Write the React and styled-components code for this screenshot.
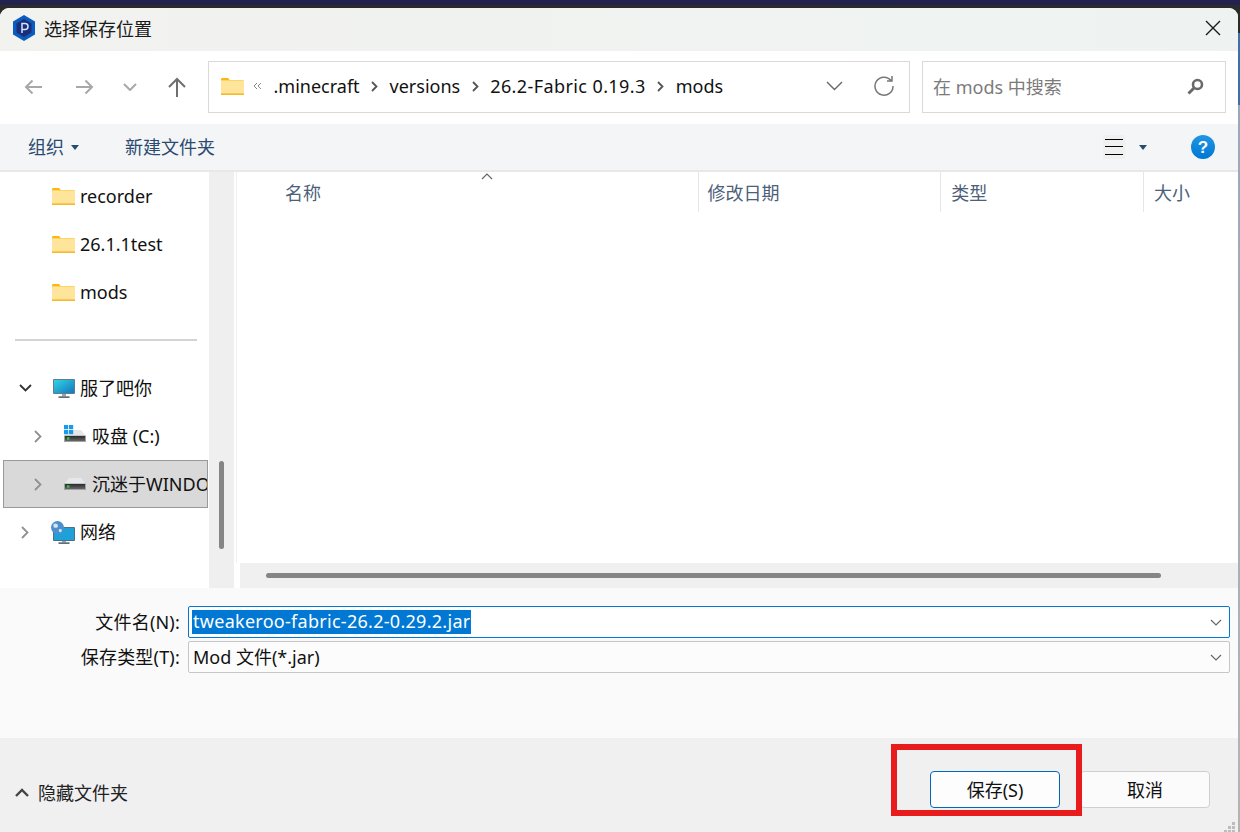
import React from 'react'
import styled, { createGlobalStyle } from 'styled-components'

const GlobalStyle = createGlobalStyle`
  html, body { margin: 0; padding: 0; height: 100%; background: #23214d; overflow: hidden; }
  * { box-sizing: border-box; }
  #root { height: 100%; }
`

const font = `"Noto Sans", "Noto Sans CJK SC", sans-serif`

const Screen = styled.div`
  position: relative;
  width: 1240px;
  height: 832px;
  padding-top: 5px;
  background: #23214d;
  font-family: ${font};
  font-size: 18px;
  color: #111;
`
const Desk = styled.div`
  display: flex;
  height: 827px;
  padding-top: 3px;
  background: linear-gradient(to bottom, #2b2b2b 0, #2b2b2b 28px, #3d70a8 28px, #3d70a8 100px, #9aa9b8 100px, #b4b4b4 827px);
`
const Win = styled.div`
  display: flex;
  flex-direction: column;
  width: 1238px;
  height: 824px;
  background: #fff;
  border-radius: 9px 9px 0 0;
  overflow: hidden;
`
const TitleBar = styled.div`
  display: flex;
  align-items: center;
  flex: 0 0 43px;
  padding: 0 17px 3px 12px;
  background: linear-gradient(to right, #f2f2ef, #eef3f2);
`
const TitleText = styled.span`
  flex: 1;
  margin-left: 8px;
  font-size: 18px;
  color: #1a1a1a;
`
const NavBar = styled.div`
  display: flex;
  align-items: flex-start;
  flex: 0 0 73px;
  padding: 10px 12px 0 8px;
`
const NavBtn = styled.div`
  display: flex;
  align-items: center;
  justify-content: center;
  flex: 0 0 auto;
  width: ${p => p.$w}px;
  height: ${p => p.$h || 52}px;
  margin-left: ${p => p.$ml || 0}px;
`
const AddressBox = styled.div`
  display: flex;
  align-items: center;
  width: 702px;
  height: 52px;
  margin-left: 2px;
  padding: 0 5px 2px 12px;
  border: 1px solid #d9d9d9;
`
const Crumbs = styled.div`
  display: flex;
  align-items: center;
  gap: 11.5px;
  flex: 1;
  margin-left: 9px;
`
const CrumbText = styled.span`
  letter-spacing: ${p => p.$spread || 0}px;
`
const SearchBox = styled.div`
  display: flex;
  align-items: center;
  justify-content: space-between;
  width: 304px;
  height: 52px;
  margin-left: 12px;
  padding: 0 21px 2px 10px;
  border: 1px solid #d9d9d9;
  color: #7b7b7b;
`
const ToolBar = styled.div`
  display: flex;
  align-items: center;
  flex: 0 0 48px;
  padding: 0 23px 0 28px;
  background: #f3f5f7;
  border-bottom: 2px solid #e8e8e8;
  color: #2c4a70;
`
const ToolItem = styled.div`
  display: flex;
  align-items: center;
  gap: 7px;
  margin-right: 46px;
`
const ToolLabel = styled.span`
  padding-bottom: 2px;
`
const ViewTools = styled.div`
  display: flex;
  align-items: center;
  margin-left: auto;
  gap: 14px;
`
const ViewBtn = styled.div`
  display: flex;
  align-items: center;
  justify-content: center;
  width: 22px;
  height: 24px;
  background: #f0f0f0;
`
const HelpIcon = styled.svg`
  margin-left: 30px;
`
const Middle = styled.div`
  display: flex;
  height: 416px;
`
const Side = styled.div`
  width: 209px;
  overflow: hidden;
`
const TreeRow = styled.div`
  display: flex;
  align-items: center;
  width: ${p => (p.$active ? 205 : 209)}px;
  height: 48px;
  margin-left: ${p => (p.$active ? 3 : 0)}px;
  padding-left: ${p => (p.$active ? p.$left - 3 : p.$left)}px;
  background: ${p => (p.$active ? '#d9d9d9' : 'transparent')};
  outline: ${p => (p.$active ? '1px solid #999' : 'none')};
  outline-offset: -1px;
  white-space: nowrap;
  overflow: hidden;
`
const TreeLabel = styled.span`
  padding-bottom: ${p => (p.$lift ? 2 : 0)}px;
`
const Arrow = styled.div`
  display: flex;
  flex: 0 0 12px;
  justify-content: center;
  margin-right: ${p => p.$gap}px;
`
const TreeIcon = styled.div`
  display: flex;
  flex: 0 0 auto;
  margin-right: ${p => p.$gap}px;
`
const Divider = styled.div`
  display: flex;
  align-items: center;
  height: 48px;
  padding: 0 12px 0 15px;
  &::after { content: ''; flex: 1; height: 2px; background: #d4d4d4; }
`
const SideTrack = styled.div`
  position: relative;
  width: 25px;
  background: #efefef;
`
const SideThumb = styled.div`
  position: absolute;
  left: 10px;
  top: 289px;
  width: 5px;
  height: 88px;
  border-radius: 3px;
  background: #858585;
`
const Main = styled.div`
  display: flex;
  flex-direction: column;
  width: 1004px;
  padding-left: 2px;
`
const ListPane = styled.div`
  flex: 1;
  border-left: 1px solid #f0f0f0;
`
const HeaderRow = styled.div`
  position: relative;
  display: flex;
  height: 40px;
`
const HeaderCell = styled.div`
  display: flex;
  align-items: center;
  width: ${p => p.$w}px;
  padding-left: ${p => p.$pad}px;
  border-right: ${p => (p.$line ? '1px solid #e6e6e6' : 'none')};
  color: #4c607a;
`
const SortMark = styled.div`
  position: absolute;
  left: 244px;
  top: 0;
  display: flex;
`
const HScroll = styled.div`
  display: flex;
  align-items: center;
  flex: 0 0 25px;
  margin-left: 4px;
  padding: 0 77px 0 26px;
  background: #f0f0f0;
`
const HThumb = styled.div`
  flex: 1;
  height: 5px;
  border-radius: 3px;
  background: #858585;
`
const FormPanel = styled.div`
  display: flex;
  flex-direction: column;
  gap: 3px;
  flex: 0 0 150px;
  padding: 18px 8px 0 0;
  background: #fafafa;
`
const FormRow = styled.div`
  display: flex;
  align-items: center;
  height: 32px;
`
const FieldLabel = styled.label`
  width: 180px;
  padding-bottom: 2px;
  text-align: right;
  letter-spacing: 0.2px;
  color: #111;
`
const Field = styled.div`
  display: flex;
  align-items: center;
  justify-content: space-between;
  margin-left: 8px;
  width: 1042px;
  height: 32px;
  padding: 0 7px 0 3px;
  background: ${p => (p.$focus ? '#fff' : '#fcfcfc')};
  border: 1px solid ${p => (p.$focus ? '#0078d4' : '#c6c6c6')};
  border-radius: 2px;
`
const Selected = styled.span`
  display: block;
  height: 24px;
  line-height: 22px;
  padding: 0 1px;
  background: #0078d4;
  color: #fff;
  letter-spacing: 0.28px;
`
const PlainValue = styled.span`
  padding: 0 0 2px 1px;
`
const Footer = styled.div`
  display: flex;
  align-items: flex-start;
  flex: 1;
  padding: 33px 28px 0 15px;
  background: #f0f0f0;
`
const HideFolders = styled.div`
  display: flex;
  align-items: center;
  gap: 9px;
  height: 42px;
  color: #222;
`
const Buttons = styled.div`
  display: flex;
  gap: 20px;
  margin-left: auto;
`
const DialogBtn = styled.button`
  width: 130px;
  height: 37px;
  padding: 0 0 2px;
  background: ${p => (p.$primary ? '#fdfdfd' : '#fbfbfb')};
  border: 1px solid ${p => (p.$primary ? '#0067c0' : '#cfcfcf')};
  border-radius: 4px;
  font: inherit;
  color: #111;
`
const RedMark = styled.div`
  position: absolute;
  left: 891px;
  top: 744px;
  width: 191px;
  height: 72px;
  border: 6px solid #e81c1c;
`
const Grip = styled.svg`
  position: absolute;
  right: 2px;
  bottom: 0;
`

const Folder = () => (
  <svg width="23" height="18" viewBox="0 0 23 18">
    <path d="M0 2.5C0 1.5.6 1 1.5 1H7l2 2.5H0z" fill="#fbb612" />
    <rect x="0" y="3" width="23" height="15" rx="1" fill="#ffd466" />
    <rect x="0" y="4" width="23" height="12" fill="#ffe59c" />
    <rect x="0" y="16.5" width="23" height="1.5" fill="#f6bb35" />
  </svg>
)

const Logo = () => (
  <svg width="24" height="26" viewBox="0 0 24 26">
    <path d="M12 0L23 6.5V19.5L12 26L1 19.5V6.5Z" fill="#0a5cc0" />
    <path d="M12 4L19.5 8.5V17.5L12 22L4.5 17.5V8.5Z" fill="#1c2e7a" />
    <path d="M10 18V8.5h3a3 3 0 0 1 0 6h-3" fill="none" stroke="#cfe6ff" strokeWidth="1.5" />
  </svg>
)

const Line = ({ w, h, d, color, sw = 1.8 }) => (
  <svg width={w} height={h} viewBox={`0 0 ${w} ${h}`}>
    <path d={d} fill="none" stroke={color} strokeWidth={sw} />
  </svg>
)

const Caret = ({ color = '#2c4a70' }) => (
  <svg width="8" height="5" viewBox="0 0 8 5"><path d="M0 0H8L4 5Z" fill={color} /></svg>
)

const Crumb = () => <Line w={7} h={11} d="M1 1L5.5 5.5L1 10" color="#555" />

const Monitor = () => (
  <svg width="22" height="19" viewBox="0 0 22 19">
    <defs>
      <linearGradient id="scr" x1="0" y1="0" x2="1" y2="1">
        <stop offset="0" stopColor="#31d3e4" />
        <stop offset="1" stopColor="#1478bc" />
      </linearGradient>
    </defs>
    <rect x="0" y="0" width="22" height="15" rx="1" fill="#5f7d8e" />
    <rect x="1" y="1" width="20" height="13" fill="url(#scr)" />
    <rect x="9" y="15" width="4" height="2.5" fill="#93a6b2" />
    <rect x="5.5" y="17.3" width="11" height="1.7" fill="#5f6f7a" />
  </svg>
)

const Drive = ({ win, id }) => (
  <svg width="22" height="22" viewBox="0 0 22 22">
    <defs>
      <linearGradient id={id} x1="0" y1="0" x2="0" y2="1">
        <stop offset="0" stopColor="#2c2c2c" />
        <stop offset="1" stopColor="#666" />
      </linearGradient>
    </defs>
    <path d="M5 5H17L22 11H0Z" fill="#e6e7e8" />
    {win && (
      <g fill="#1a9be8">
        <rect x="0" y="0" width="4.2" height="4.2" />
        <rect x="5" y="0" width="4.2" height="4.2" />
        <rect x="0" y="5" width="4.2" height="4.2" />
        <rect x="5" y="5" width="4.2" height="4.2" />
      </g>
    )}
    <rect x="0" y="10.5" width="22" height="6.5" fill="#a2a2a2" />
    <rect x="1" y="11" width="20" height="5" fill={`url(#${id})`} />
    <rect x="3" y="12.3" width="2.4" height="2.4" fill="#22d43c" />
  </svg>
)

const Network = () => (
  <svg width="24" height="23" viewBox="0 0 24 23">
    <rect x="2" y="6" width="22" height="14" rx="1" fill="#4a7286" />
    <rect x="3" y="7" width="20" height="12" fill="#20a0d8" />
    <rect x="11" y="20" width="4" height="1.5" fill="#93a6b2" />
    <rect x="7.5" y="21.3" width="11" height="1.7" fill="#5f6f7a" />
    <circle cx="6.5" cy="6.5" r="6.5" fill="#4f8fcb" />
    <path d="M2.5 3C5 1.5 7 3 7 5S4 7.5 2.5 6ZM8 8.5C10 7.5 11.5 8.5 10.5 10.5S7 10.5 8 8.5Z" fill="#d3e5f3" />
  </svg>
)

const tree = [
  { label: 'recorder', left: 52, iconGap: 5, icon: <Folder /> },
  { label: '26.1.1test', left: 52, iconGap: 5, icon: <Folder /> },
  { label: 'mods', left: 52, iconGap: 5, icon: <Folder /> },
  { divider: true },
  { label: '服了吧你', left: 19, open: true, gap: 21, iconGap: 5, lift: true, icon: <Monitor /> },
  { label: '吸盘 (C:)', left: 32, closed: true, gap: 20, iconGap: 6, lift: true, icon: <Drive win id="bodyC" /> },
  { label: '沉迷于WINDOWS', left: 32, closed: true, gap: 20, iconGap: 6, lift: true, active: true, icon: <Drive id="bodyD" /> },
  { label: '网络', left: 19, closed: true, gap: 20, iconGap: 5, lift: true, icon: <Network /> },
]

const columns = [
  { label: '名称', w: 462, pad: 48, line: true },
  { label: '修改日期', w: 243, pad: 9, line: true },
  { label: '类型', w: 203, pad: 10, line: true },
  { label: '大小', w: 94, pad: 10 },
]

const App = () => {
  return (
    <Screen>
      <GlobalStyle />
      <Desk>
        <Win>
          <TitleBar>
            <Logo />
            <TitleText>选择保存位置</TitleText>
            <Line w={16} h={16} d="M1 1L15 15M15 1L1 15" color="#1a1a1a" sw={1.4} />
          </TitleBar>

          <NavBar>
            <NavBtn $w={50}><Line w={18} h={16} d="M18 8H2M8.5 1.5L2 8L8.5 14.5" color="#a8a8a8" sw={2} /></NavBtn>
            <NavBtn $w={54}><Line w={18} h={16} d="M0 8H16M9.5 1.5L16 8L9.5 14.5" color="#a8a8a8" sw={2} /></NavBtn>
            <NavBtn $w={36}><Line w={14} h={8} d="M1 1L7 7L13 1" color="#a8a8a8" sw={2} /></NavBtn>
            <NavBtn $w={58}><Line w={20} h={20} d="M10 20V2M2 10L10 2L18 10" color="#6f6f6f" sw={2} /></NavBtn>
            <AddressBox>
              <Folder />
              <Crumbs>
                <Line w={9} h={8} d="M4 1L1 4L4 7M8 1L5 4L8 7" color="#888" sw={1} />
                <CrumbText>.minecraft</CrumbText>
                <Crumb />
                <CrumbText>versions</CrumbText>
                <Crumb />
                <CrumbText $spread={0.4}>26.2-Fabric 0.19.3</CrumbText>
                <Crumb />
                <CrumbText>mods</CrumbText>
              </Crumbs>
              <NavBtn $w={20} $h={40}><Line w={17} h={10} d="M1 1L8.5 8.5L16 1" color="#666" sw={1.4} /></NavBtn>
              <NavBtn $w={40} $h={40} $ml={20}>
                <Line w={20} h={20} d="M17 4.5A9 9 0 1 0 19 10M18 0V5H13" color="#777" sw={1.5} />
              </NavBtn>
            </AddressBox>
            <SearchBox>
              <span>在 mods 中搜索</span>
              <svg width="17" height="17" viewBox="0 0 17 17">
                <circle cx="10.5" cy="6.5" r="4.5" fill="none" stroke="#6a6a6a" strokeWidth="2.6" />
                <path d="M7 10L1.5 15.5" stroke="#6a6a6a" strokeWidth="3" />
              </svg>
            </SearchBox>
          </NavBar>

          <ToolBar>
            <ToolItem><ToolLabel>组织</ToolLabel> <Caret /></ToolItem>
            <ToolItem><ToolLabel>新建文件夹</ToolLabel></ToolItem>
            <ViewTools>
              <ViewBtn>
                <svg width="18" height="16" viewBox="0 0 18 16">
                  <path d="M0 .5H18M0 7.5H18M0 15.5H18" stroke="#000" strokeWidth="1" />
                </svg>
              </ViewBtn>
              <Caret />
              <HelpIcon width="24" height="24" viewBox="0 0 24 24">
                <defs>
                  <linearGradient id="help" x1="0" y1="0" x2="0" y2="1">
                    <stop offset="0" stopColor="#2196e3" />
                    <stop offset="1" stopColor="#0078d2" />
                  </linearGradient>
                </defs>
                <circle cx="12" cy="12" r="12" fill="url(#help)" />
                <text x="12" y="18" textAnchor="middle" fontSize="17" fontWeight="700" fill="#fff" fontFamily="Liberation Sans, sans-serif">?</text>
              </HelpIcon>
            </ViewTools>
          </ToolBar>

          <Middle>
            <Side>
              {tree.map((row, i) => row.divider ? <Divider key={i} /> : (
                <TreeRow key={i} $left={row.left} $active={row.active}>
                  {row.open && <Arrow $gap={row.gap}><Line w={13} h={8} d="M1 1L6.5 6.5L12 1" color="#333" /></Arrow>}
                  {row.closed && <Arrow $gap={row.gap}><Line w={8} h={13} d="M1 1L6.5 6.5L1 12" color="#909090" /></Arrow>}
                  <TreeIcon $gap={row.iconGap}>{row.icon}</TreeIcon>
                  <TreeLabel $lift={row.lift}>{row.label}</TreeLabel>
                </TreeRow>
              ))}
            </Side>
            <SideTrack><SideThumb /></SideTrack>
            <Main>
              <ListPane>
                <HeaderRow>
                  {columns.map(c => (
                    <HeaderCell key={c.label} $w={c.w} $pad={c.pad} $line={c.line}>{c.label}</HeaderCell>
                  ))}
                  <SortMark><Line w={12} h={8} d="M1 7L6 2L11 7" color="#666" sw={1.2} /></SortMark>
                </HeaderRow>
              </ListPane>
              <HScroll><HThumb /></HScroll>
            </Main>
          </Middle>

          <FormPanel>
            <FormRow>
              <FieldLabel>文件名(N):</FieldLabel>
              <Field $focus>
                <Selected>tweakeroo-fabric-26.2-0.29.2.jar</Selected>
                <Line w={12} h={7} d="M1 1L6 6L11 1" color="#666" sw={1.2} />
              </Field>
            </FormRow>
            <FormRow>
              <FieldLabel>保存类型(T):</FieldLabel>
              <Field>
                <PlainValue>Mod 文件(*.jar)</PlainValue>
                <Line w={12} h={7} d="M1 1L6 6L11 1" color="#666" sw={1.2} />
              </Field>
            </FormRow>
          </FormPanel>

          <Footer>
            <HideFolders>
              <Line w={14} h={9} d="M1 8L7 2L13 8" color="#444" sw={2.4} />
              <span>隐藏文件夹</span>
            </HideFolders>
            <Buttons>
              <DialogBtn $primary>保存(S)</DialogBtn>
              <DialogBtn>取消</DialogBtn>
            </Buttons>
          </Footer>
        </Win>
      </Desk>
      <RedMark />
      <Grip width="14" height="10" viewBox="0 0 14 10">
        <g fill="#bdbdbd">
          <rect x="8" y="0" width="3" height="3" />
          <rect x="4" y="4" width="3" height="3" />
          <rect x="8" y="4" width="3" height="3" />
          <rect x="0" y="8" width="3" height="2" />
          <rect x="4" y="8" width="3" height="2" />
          <rect x="8" y="8" width="3" height="2" />
        </g>
      </Grip>
    </Screen>
  )
}

export default App
